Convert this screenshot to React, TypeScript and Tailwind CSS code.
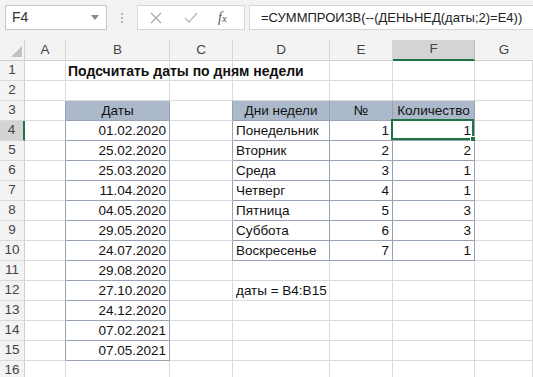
import React from 'react';

const FONT = { fontFamily: '"Liberation Sans", Arial, sans-serif' };

const dates = [
  '01.02.2020', '25.02.2020', '25.03.2020', '11.04.2020', '04.05.2020', '29.05.2020',
  '24.07.2020', '29.08.2020', '27.10.2020', '24.12.2020', '07.02.2021', '07.05.2021',
];

const days = [
  ['Понедельник', 1, 1],
  ['Вторник', 2, 2],
  ['Среда', 3, 1],
  ['Четверг', 4, 1],
  ['Пятница', 5, 3],
  ['Суббота', 6, 3],
  ['Воскресенье', 7, 1],
] as const;

const colLetters = ['A', 'B', 'C', 'D', 'E', 'F', 'G'];

function inTable(r: number, c: number) {
  if (c === 2 && r >= 3 && r <= 15) return true;
  if (c >= 4 && c <= 6 && r >= 3 && r <= 10) return true;
  return false;
}

function cellContent(r: number, c: number): { text: string; align: string; bold?: boolean } | null {
  if (r === 1 && c === 2) return { text: 'Подсчитать даты по дням недели', align: 'justify-start', bold: true };
  if (r === 3 && c === 2) return { text: 'Даты', align: 'justify-center' };
  if (r === 3 && c === 4) return { text: 'Дни недели', align: 'justify-center' };
  if (r === 3 && c === 5) return { text: '№', align: 'justify-center' };
  if (r === 3 && c === 6) return { text: 'Количество', align: 'justify-center' };
  if (c === 2 && r >= 4 && r <= 15) return { text: dates[r - 4], align: 'justify-end' };
  if (r >= 4 && r <= 10) {
    const d = days[r - 4];
    if (c === 4) return { text: d[0], align: 'justify-start' };
    if (c === 5) return { text: String(d[1]), align: 'justify-end' };
    if (c === 6) return { text: String(d[2]), align: 'justify-end' };
  }
  if (r === 12 && c === 4) return { text: 'даты = B4:B15', align: 'justify-start' };
  return null;
}

function Cell({ r, c }: { r: number; c: number }) {
  const t = inTable(r, c);
  const rightDark = t || inTable(r, c + 1);
  const content = cellContent(r, c);
  const header = r === 3 && t;
  const selected = r === 4 && c === 6;
  return (
    <div
      className={`relative flex items-center h-[20px] border-b ${rightDark ? 'border-r border-r-[#97a3b3]' : 'border-r border-r-[#dadada]'} ${t ? 'border-b-[#97a3b3]' : 'border-b-[#dadada]'} ${header ? 'bg-[#acb9ca]' : 'bg-white'} ${content ? content.align : ''} px-[3px] whitespace-nowrap overflow-visible`}
    >
      {content && (
        <span className={`text-[13.5px] text-[#111] leading-none ${content.bold ? 'font-bold text-[14px] absolute left-[2px] z-10' : ''}`}>
          {content.text}
        </span>
      )}
      {selected && (
        <div className="absolute -left-[2px] -top-[2px] right-0 bottom-0 border-2 border-[#217346]">
          <div className="absolute -right-[4px] -bottom-[4px] w-[6px] h-[6px] bg-[#217346] border border-white" />
        </div>
      )}
    </div>
  );
}

export default function App() {
  const rows = Array.from({ length: 16 }, (_, i) => i + 1);
  return (
    <div className="w-[533px] h-[377px] overflow-hidden bg-white" style={FONT}>
      {/* formula bar */}
      <div className="h-[40px] bg-[#f3f3f3] flex items-start pt-[5px] pl-[5px]">
        <div className="w-[102px] h-[25px] bg-white border border-[#c6c6c6] flex items-center pl-[6px] pr-[7px] justify-between">
          <span className="text-[14px] text-[#333]">F4</span>
          <svg width="8" height="5" viewBox="0 0 8 5"><path d="M0 0 L8 0 L4 5 Z" fill="#8a8a8a" /></svg>
        </div>
        <div className="w-[30px] h-[25px] flex flex-col items-center justify-center gap-[2px]">
          <div className="w-[2px] h-[2px] bg-[#b5b5b5]" />
          <div className="w-[2px] h-[2px] bg-[#b5b5b5]" />
          <div className="w-[2px] h-[2px] bg-[#b5b5b5]" />
        </div>
        <div className="w-[108px] h-[25px] bg-white border border-[#d6d6d6] flex items-center">
          <svg className="ml-[12px]" width="12" height="12" viewBox="0 0 12 12">
            <path d="M1 1 L11 11 M11 1 L1 11" stroke="#a8a8a8" strokeWidth="1.2" />
          </svg>
          <svg className="ml-[22px]" width="14" height="11" viewBox="0 0 14 11">
            <path d="M1 6 L5 10 L13 1" stroke="#b8b8b8" strokeWidth="1.3" fill="none" />
          </svg>
          <span className="ml-[20px] text-[14px] italic text-[#555]" style={{ fontFamily: '"Liberation Serif", serif' }}>
            f<span className="text-[11px]">x</span>
          </span>
        </div>
        <div className="ml-[4px] flex-1 h-[25px] bg-white border border-[#d6d6d6] border-r-0 flex items-center pl-[11px]">
          <span className="text-[13px] text-[#222] whitespace-nowrap">=СУММПРОИЗВ(--(ДЕНЬНЕД(даты;2)=E4))</span>
        </div>
      </div>

      {/* grid */}
      <div className="grid grid-cols-[25px_41px_104px_63px_97px_63px_82px_58px]">
        {/* column header row */}
        <div className="h-[21px] bg-[#f3f3f3] border-r border-b border-[#d0d0d0] relative">
          <svg className="absolute right-[2px] bottom-[3px]" width="11" height="11" viewBox="0 0 11 11">
            <path d="M11 0 L11 11 L0 11 Z" fill="#c2c2c2" />
          </svg>
        </div>
        {colLetters.map((l, i) => (
          <div
            key={l}
            className={`h-[21px] flex items-center justify-center text-[13.5px] border-r text-[#444] ${l === 'F' ? 'bg-[#d4d4d4] border-b-2 border-b-[#217346] border-r-[#bdbdbd]' : 'bg-[#f3f3f3] border-b border-b-[#d0d0d0] border-r-[#d6d6d6]'} ${i === 6 ? 'border-r-0' : ''}`}
          >
            {l}
          </div>
        ))}

        {rows.map((r) => (
          <React.Fragment key={r}>
            <div
              className={`h-[20px] flex items-center justify-center text-[13.5px] text-[#444] border-b border-b-[#dadada] ${r === 4 ? 'bg-[#d4d4d4] border-r-2 border-r-[#217346]' : 'bg-[#f3f3f3] border-r border-r-[#d0d0d0]'}`}
            >
              {r}
            </div>
            {[1, 2, 3, 4, 5, 6, 7].map((c) => (
              <Cell key={c} r={r} c={c} />
            ))}
          </React.Fragment>
        ))}
      </div>
    </div>
  );
}
